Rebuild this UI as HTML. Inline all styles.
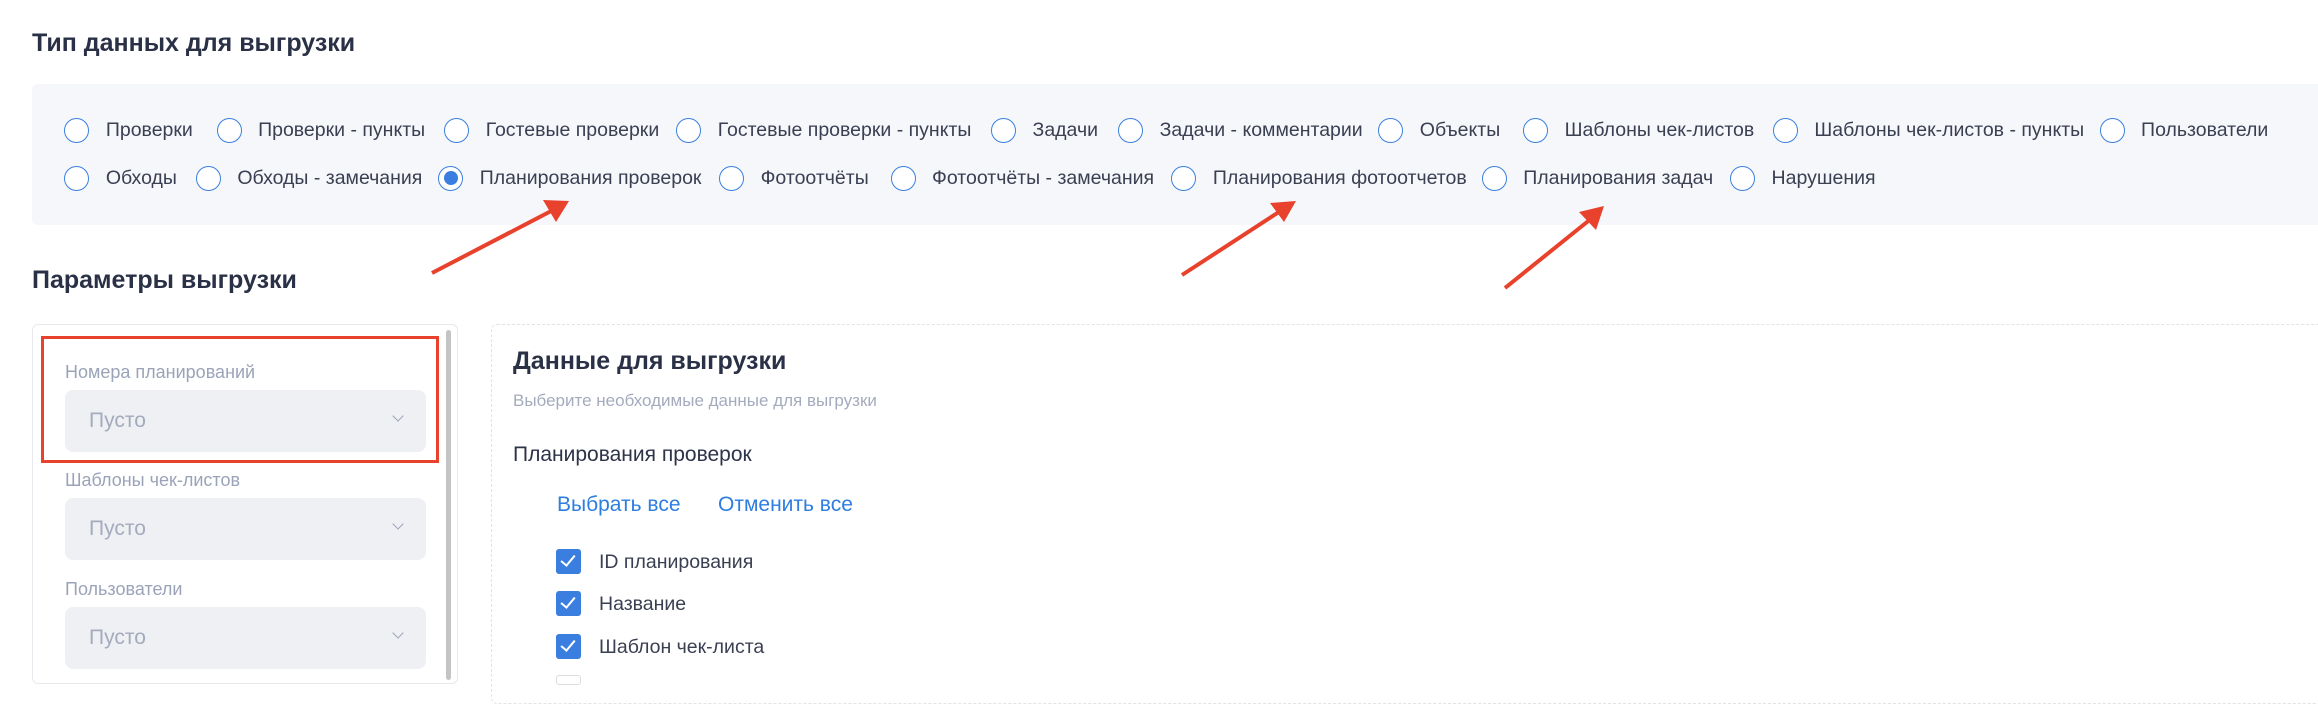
<!DOCTYPE html>
<html><head><meta charset="utf-8"><style>
*{margin:0;padding:0;box-sizing:border-box}
body{width:2318px;height:678px;overflow:hidden;background:#fff;font-family:"Liberation Sans",sans-serif;color:#2d3348;position:relative}
.a{position:absolute;white-space:nowrap}
.h{font-size:25px;font-weight:bold;color:#2a3146}
.r{position:absolute;width:25px;height:25px;border:1.5px solid #3a7fe0;border-radius:50%;background:#fff}
.t{position:absolute;font-size:19.5px;color:#3a3f52;white-space:nowrap;line-height:22px}
.lab{font-size:18px;color:#9aa3b8}
.sel{position:absolute;left:65px;width:361px;height:62px;background:#eff0f4;border-radius:8px}
.sel span{position:absolute;left:24px;top:19px;font-size:21px;color:#a4abbd}
.sel i{position:absolute;right:24px;top:22px;width:8px;height:8px;border-right:1.5px solid #9aa3b8;border-bottom:1.5px solid #9aa3b8;transform:rotate(45deg)}
.cb{position:absolute;left:556px;width:25px;height:25px;background:#3a7fe0;border-radius:3px}
.cb:after{content:"";position:absolute;left:8px;top:3px;width:6px;height:12px;border-right:2px solid #fff;border-bottom:2px solid #fff;transform:rotate(40deg)}
</style></head><body>
<div class="a h" style="left:32px;top:29px">Тип данных для выгрузки</div>
<div class="a" style="left:32px;top:84px;width:2286px;height:141px;background:#f6f7fb;border-radius:6px 0 0 6px"></div>

<script>
var r1=[[52,"Проверки"],[155,"Проверки - пункты"],[309,"Гостевые проверки"],[466,"Гостевые проверки - пункты"],[679,"Задачи"],[765,"Задачи - комментарии"],[941,"Объекты"],[1039,"Шаблоны чек-листов"],[1208,"Шаблоны чек-листов - пункты"],[1429,"Пользователи"]];
var r2=[[52,"Обходы"],[141,"Обходы - замечания"],[305,"Планирования проверок"],[495,"Фотоотчёты"],[611,"Фотоотчёты - замечания"],[801,"Планирования фотоотчетов"],[1011,"Планирования задач"],[1179,"Нарушения"]];
var s=1.478,h="";
function row(a,y){a.forEach(function(e){var x=e[0]*s;h+='<div class="r" style="left:'+(x-12.5)+'px;top:'+(y-12.5)+'px"></div><div class="t" style="left:'+(x+29)+'px;top:'+(y-11)+'px">'+e[1]+'</div>';});}
row(r1,130);row(r2,178);
document.write(h);
</script>
<div class="a" style="left:444px;top:171px;width:14px;height:14px;border-radius:50%;background:#3a7fe0"></div>

<div class="a h" style="left:32px;top:266px">Параметры выгрузки</div>
<div class="a" style="left:32px;top:324px;width:426px;height:360px;border:1px solid #e8e9ee;border-radius:6px"></div>
<div class="a" style="left:446px;top:330px;width:5px;height:350px;background:#c4c4c4;border-radius:3px"></div>
<div class="a" style="left:41px;top:336px;width:398px;height:127px;border:3px solid #e8412c"></div>
<div class="a lab" style="left:65px;top:362px">Номера планирований</div>
<div class="sel" style="top:390px"><span>Пусто</span><i></i></div>
<div class="a lab" style="left:65px;top:470px">Шаблоны чек-листов</div>
<div class="sel" style="top:498px"><span>Пусто</span><i></i></div>
<div class="a lab" style="left:65px;top:579px">Пользователи</div>
<div class="sel" style="top:607px"><span>Пусто</span><i></i></div>

<div class="a" style="left:491px;top:324px;width:1840px;height:380px;border:1px dashed #e2e3e8;border-radius:6px"></div>
<div class="a h" style="left:513px;top:347px">Данные для выгрузки</div>
<div class="a" style="left:513px;top:391px;font-size:17px;color:#a4abbd">Выберите необходимые данные для выгрузки</div>
<div class="a" style="left:513px;top:443px;font-size:21px;color:#2d3348">Планирования проверок</div>
<div class="a" style="left:557px;top:493px;font-size:21px;color:#2e7de0">Выбрать все</div>
<div class="a" style="left:718px;top:493px;font-size:21px;color:#2e7de0">Отменить все</div>
<div class="cb" style="top:549px"></div><div class="t" style="left:599px;top:551px">ID планирования</div>
<div class="cb" style="top:591px"></div><div class="t" style="left:599px;top:593px">Название</div>
<div class="cb" style="top:634px"></div><div class="t" style="left:599px;top:636px">Шаблон чек-листа</div>
<div class="a" style="left:556px;top:675px;width:25px;height:10px;border:1px solid #ddd;border-radius:3px"></div>

<svg class="a" style="left:0;top:0" width="2318" height="678">
<g stroke="#e8412c" stroke-width="4" fill="#e8412c">
<line x1="432" y1="273" x2="555" y2="209"/><polygon points="569,201 543,200 556,222" stroke="none"/>
<line x1="1182" y1="275" x2="1282" y2="210"/><polygon points="1296,201 1270,203 1284,222" stroke="none"/>
<line x1="1505" y1="288" x2="1592" y2="218"/><polygon points="1604,206 1579,212 1596,230" stroke="none"/>
</g></svg>
</body></html>
